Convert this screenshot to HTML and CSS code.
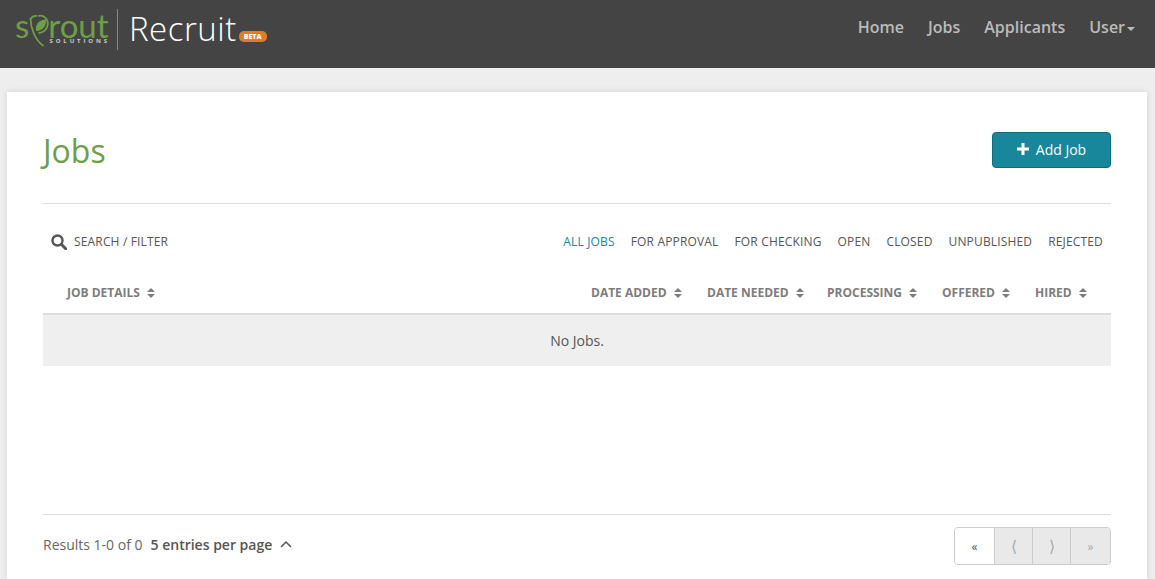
FILE: index.html
```html
<!DOCTYPE html>
<html>
<head>
    <title>Jobs - Sprout Recruit</title>
    <link rel="stylesheet" href="styles.css">
</head>
<body>

    <div class="navbar">
        <a class="brand" href="#">
            <div class="sprout">
                <div class="sprout-word">
                    <span>s</span>
                    <svg class="sprout-leaf" width="20" height="34" viewBox="0 0 20 34">
                        <path d="M9 3C15 1.500 19 6 18.800 11C18.600 16 14.500 20 9.500 20" fill="none" stroke="#6e9f45" stroke-width="1.800"/>
                        <path d="M1.500 6C3 3.500 5.500 2.800 8 3" fill="none" stroke="#6e9f45" stroke-width="1.800"/>
                        <path d="M1.500 5C1.500 15 6 27 14.500 33" fill="none" stroke="#6e9f45" stroke-width="1.800"/>
                        <path d="M7 18C6 11 10 7 17 6.500C17.500 13 14 18 7 18Z" fill="#6e9f45"/>
                    </svg>
                    <span>rout</span>
                </div>
                <div class="sprout-sub">SOLUTIONS</div>
            </div>
            <div class="brand-line"></div>
            <div class="recruit">Recruit</div>
            <div class="beta">BETA</div>
        </a>
        <div class="nav-links">
            <a href="#">Home</a>
            <a href="#">Jobs</a>
            <a href="#">Applicants</a>
            <a href="#">User<span class="nav-caret"></span></a>
        </div>
    </div>

    <div class="card">
        <div class="title-row">
            <h1>Jobs</h1>
            <button class="add-btn">
                <svg width="12" height="12" viewBox="0 0 12 12"><path d="M4.500 0H7.500V4.500H12V7.500H7.500V12H4.500V7.500H0V4.500H4.500Z" fill="#fff"/></svg>
                <span class="add-label">Add Job</span>
            </button>
        </div>

        <div class="filter-row">
            <a class="search" href="#">
                <svg width="16" height="16" viewBox="0 0 16 16">
                    <circle cx="6.500" cy="6.500" r="5" fill="none" stroke="#555" stroke-width="2.400"/>
                    <path d="M10.300 10.300L14.700 14.700" stroke="#555" stroke-width="3" stroke-linecap="round"/>
                </svg>
                SEARCH / FILTER
            </a>
            <div class="tabs">
                <a class="active" href="#">ALL JOBS</a>
                <a href="#">FOR APPROVAL</a>
                <a href="#">FOR CHECKING</a>
                <a href="#">OPEN</a>
                <a href="#">CLOSED</a>
                <a href="#">UNPUBLISHED</a>
                <a href="#">REJECTED</a>
            </div>
        </div>

        <table>
            <thead>
                <tr>
                    <th>JOB DETAILS<span class="sort"></span></th>
                    <th class="c-added">DATE ADDED<span class="sort"></span></th>
                    <th class="c-needed">DATE NEEDED<span class="sort"></span></th>
                    <th class="c-proc">PROCESSING<span class="sort"></span></th>
                    <th class="c-offered">OFFERED<span class="sort"></span></th>
                    <th class="c-hired">HIRED<span class="sort"></span></th>
                </tr>
            </thead>
            <tbody>
                <tr>
                    <td colspan="6">No Jobs.</td>
                </tr>
            </tbody>
        </table>

        <div class="footer-row">
            <div class="results">
                Results 1-0 of 0
                <b>5 entries per page</b>
                <svg width="12" height="8" viewBox="0 0 12 8"><path d="M1 7L6 2L11 7" fill="none" stroke="#555" stroke-width="1.500"/></svg>
            </div>
            <div class="pager">
                <a class="first" href="#">«</a>
                <a class="big" href="#">⟨</a>
                <a class="big" href="#">⟩</a>
                <a class="last" href="#">»</a>
            </div>
        </div>
    </div>

</body>
</html>
```

FILE: styles.css
```css
html, body {
    height: 100%;
}

body {
    background-color: #eeeeee;
    color: #555;
    font-family: "Open Sans", Arial, sans-serif;
    font-size: 14px;
    margin: 0;
    display: flex;
    flex-direction: column;
    overflow: hidden;
}

a {
    text-decoration: none;
    color: inherit;
}

.navbar {
    height: 68px;
    flex: none;
    background-color: #444444;
    display: flex;
    justify-content: space-between;
    align-items: flex-start;
    padding: 0 20px 0 15px;
}

.brand {
    display: flex;
    align-items: flex-start;
}

.sprout {
    width: 93px;
    padding-top: 13px;
    color: #6e9f45;
}

.sprout-word {
    display: flex;
    font-family: Lato, sans-serif;
    font-size: 33px;
    font-weight: 400;
    line-height: 24px;
    height: 25px;
}

.sprout-leaf {
    margin: 0 -1px 0 0;
    flex: none;
}

.sprout-sub {
    color: #cccccc;
    font-size: 6px;
    font-weight: 700;
    letter-spacing: 2.900px;
    margin-right: -2px;
    text-align: right;
    line-height: 6px;
}

.brand-line {
    width: 1px;
    height: 41px;
    margin: 9px 11px 0 9px;
    background-color: #888;
}

.recruit {
    color: #ffffff;
    font-size: 33px;
    font-weight: 300;
    line-height: 58px;
    letter-spacing: 0.500px;
}

.beta {
    background-color: #e07b26;
    color: #fff;
    font-size: 7px;
    font-weight: 800;
    line-height: 11px;
    padding: 0 5px;
    border-radius: 5px;
    margin: 31px 0 0 2px;
    height: 11px;
}

.nav-links {
    display: flex;
    gap: 24px;
    color: #bbbbbb;
    font-size: 16px;
    font-weight: 600;
    line-height: 54px;
}

.nav-caret {
    display: inline-block;
    border-top: 4px solid #bbb;
    border-left: 4px solid transparent;
    border-right: 4px solid transparent;
    margin-left: 2px;
    vertical-align: 2px;
}

.card {
    flex: 1;
    margin: 24px 8px 0 7px;
    padding: 40px 36px 0;
    background-color: #fff;
    box-shadow: 0 0 6px rgba(0, 0, 0, 0.12);
}

.title-row {
    display: flex;
    justify-content: space-between;
    align-items: flex-start;
    height: 71px;
    border-bottom: 1px solid #ddd;
}

h1 {
    margin: 0;
    color: #6e9f45;
    font-size: 32px;
    font-weight: 400;
    line-height: 38px;
}

.add-btn {
    width: 119px;
    height: 36px;
    padding: 0 0 2px;
    background-color: #18869b;
    border: 1px solid #0f6a7b;
    border-radius: 4px;
    color: #fff;
    font-family: inherit;
    font-size: 14px;
    display: flex;
    align-items: center;
    justify-content: center;
    gap: 7px;
}

.filter-row {
    display: flex;
    justify-content: space-between;
    align-items: center;
    height: 75px;
    padding: 0 8px;
    font-size: 12px;
    font-weight: 500;
    letter-spacing: 0.160px;
    color: #555;
}

.search {
    display: flex;
    align-items: center;
    gap: 7px;
}

.tabs {
    display: flex;
    gap: 16px;
}

.tabs .active {
    color: #18869b;
}

table {
    width: 100%;
    border-collapse: collapse;
    table-layout: fixed;
}

th {
    box-sizing: border-box;
    padding: 0 0 8px 24px;
    height: 35px;
    text-align: left;
    font-size: 12px;
    font-weight: 700;
    color: #7d7d7d;
    border-bottom: 2px solid #ddd;
    white-space: nowrap;
}

.c-added { width: 116px; }
.c-needed { width: 120px; }
.c-proc { width: 115px; }
.c-offered { width: 93px; }
.c-hired { width: 100px; }

.sort {
    display: inline-block;
    position: relative;
    width: 8px;
    height: 10px;
    margin-left: 7px;
    vertical-align: -1px;
}

.sort::before,
.sort::after {
    content: "";
    position: absolute;
    left: 0;
    border-left: 4px solid transparent;
    border-right: 4px solid transparent;
}

.sort::before {
    top: 0;
    border-bottom: 4px solid #7d7d7d;
}

.sort::after {
    bottom: 0;
    border-top: 4px solid #7d7d7d;
}

td {
    background-color: #efefef;
    text-align: center;
    height: 51px;
    padding: 0;
    color: #555;
}

.footer-row {
    margin-top: 148px;
    border-top: 1px solid #ddd;
    padding-top: 12px;
    display: flex;
    justify-content: space-between;
    align-items: center;
}

.results {
    display: flex;
    align-items: center;
    padding-bottom: 4px;
    color: #666;
}

.results b {
    font-weight: 600;
    color: #555;
    margin: 0 8px;
}

.pager {
    display: flex;
    height: 36px;
    border: 1px solid #ccc;
    border-radius: 4px;
    overflow: hidden;
}

.pager a {
    width: 37px;
    display: flex;
    align-items: center;
    justify-content: center;
    border-left: 1px solid #ccc;
    font-size: 12px;
    background-color: #e9e9e9;
    color: #aaa;
}

.pager .big {
    font-size: 16px;
}

.pager .first {
    width: 39px;
    border-left: 0;
    background-color: #fff;
    color: #555;
}

.pager .last {
    width: 39px;
}
```
